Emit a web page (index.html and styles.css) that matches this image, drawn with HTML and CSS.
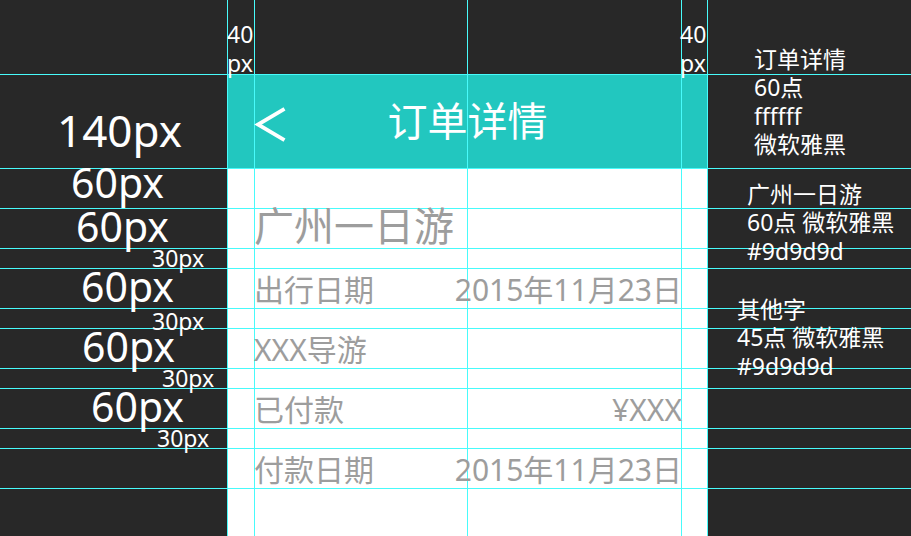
FILE: index.html
```html
<!DOCTYPE html>
<html lang="zh-CN">
<head>
<meta charset="utf-8">
<title>订单详情 标注</title>
<link rel="stylesheet" href="styles.css">
</head>
<body>
<div class="page">
  <div class="left">
    <div class="band b140 x57">140px</div>
    <div class="band b60 b60-first x71">60px</div>
    <div class="band b60 x76">60px</div>
    <div class="band b30 x152">30px</div>
    <div class="band b60 x81">60px</div>
    <div class="band b30 b30-low x152">30px</div>
    <div class="band b60 x82">60px</div>
    <div class="band b30 x162">30px</div>
    <div class="band b60 x91">60px</div>
    <div class="band b30 x157">30px</div>
  </div>

  <div class="phone">
    <div class="phone-top">
      <div class="top-label">40 px</div>
      <div class="top-label">40 px</div>
    </div>
    <div class="header">
      <svg class="back" width="32" height="36" viewBox="0 0 32 36" aria-hidden="true">
        <polyline points="30.5,1.8 4,17.5 30.5,33.2" fill="none" stroke="#ffffff" stroke-width="3.8" stroke-linejoin="miter"/>
      </svg>
      <div class="title">订单详情</div>
      <div class="spacer"></div>
    </div>
    <div class="content">
      <div class="trip">广州一日游</div>
      <div class="row"><span>出行日期</span><span>2015年11月23日</span></div>
      <div class="row"><span>XXX导游</span></div>
      <div class="row"><span>已付款</span><span>¥XXX</span></div>
      <div class="row"><span>付款日期</span><span>2015年11月23日</span></div>
    </div>
  </div>

  <div class="notes">
    <div class="note n1">
      <div>订单详情</div>
      <div>60点</div>
      <div>ffffff</div>
      <div>微软雅黑</div>
    </div>
    <div class="note n2">
      <div>广州一日游</div>
      <div>60点 微软雅黑</div>
      <div>#9d9d9d</div>
    </div>
    <div class="note n3">
      <div>其他字</div>
      <div>45点 微软雅黑</div>
      <div>#9d9d9d</div>
    </div>
  </div>
</div>

<div class="guides" aria-hidden="true">
  <div class="gh g74"></div>
  <div class="gh g168"></div>
  <div class="gh g208"></div>
  <div class="gh g248"></div>
  <div class="gh g268"></div>
  <div class="gh g308"></div>
  <div class="gh g328"></div>
  <div class="gh g368"></div>
  <div class="gh g388"></div>
  <div class="gh g428"></div>
  <div class="gh g448"></div>
  <div class="gh g488"></div>
  <div class="gv v227"></div>
  <div class="gv v254"></div>
  <div class="gv v467"></div>
  <div class="gv v681"></div>
  <div class="gv v707"></div>
</div>
</body>
</html>
```
FILE: styles.css
```css
* { box-sizing: border-box; }

html, body {
  margin: 0;
  padding: 0;
}

body {
  width: 911px;
  height: 536px;
  overflow: hidden;
  background: #282828;
  font-family: "Noto Sans", "Noto Sans CJK SC", sans-serif;
  color: #ffffff;
}

.page {
  display: flex;
  width: 911px;
  height: 536px;
}

/* ---------- left measurement column ---------- */
.left {
  width: 227px;
  flex: none;
  display: flex;
  flex-direction: column;
  padding-top: 74px;
}

.band {
  position: relative;
  z-index: 1;
  white-space: nowrap;
  color: #ffffff;
  flex: none;
}

.b140 {
  height: 94px;
  font-size: 44px;
  line-height: 44px;
  padding-top: 34px;
}

.b60 {
  height: 40px;
  font-size: 41px;
  line-height: 36px;
}

.b60-first { line-height: 28px; }

.b30 {
  height: 20px;
  font-size: 23px;
  line-height: 20px;
}

.b30-low { line-height: 26px; }

.x57 { padding-left: 57px; }
.x71 { padding-left: 71px; }
.x76 { padding-left: 76px; }
.x81 { padding-left: 81px; }
.x82 { padding-left: 82px; }
.x91 { padding-left: 91px; }
.x152 { padding-left: 152px; }
.x157 { padding-left: 157px; }
.x162 { padding-left: 162px; }

/* ---------- phone ---------- */
.phone {
  width: 480px;
  flex: none;
  display: flex;
  flex-direction: column;
}

.phone-top {
  height: 74px;
  flex: none;
  display: flex;
  justify-content: space-between;
  padding-top: 20px;
}

.top-label {
  position: relative;
  z-index: 1;
  width: 27px;
  font-size: 23px;
  line-height: 29px;
  color: #ffffff;
}

.header {
  height: 94px;
  flex: none;
  background: #22c7bf;
  display: grid;
  grid-template-columns: 1fr auto 1fr;
  align-items: center;
  padding: 0 26px 0 27px;
}

.back {
  display: block;
  position: relative;
  z-index: 1;
  margin-top: 7px;
}

.title {
  position: relative;
  z-index: 1;
  font-size: 40px;
  line-height: 40px;
  color: #ffffff;
  white-space: nowrap;
}

.content {
  flex: 1;
  background: #ffffff;
  display: flex;
  flex-direction: column;
  gap: 20px;
  padding: 40px 25px 0 27px;
  color: #9d9d9d;
}

.trip {
  position: relative;
  z-index: 1;
  height: 40px;
  font-size: 40px;
  line-height: 36px;
  white-space: nowrap;
}

.row {
  position: relative;
  z-index: 1;
  height: 40px;
  display: flex;
  justify-content: space-between;
  font-size: 30px;
  line-height: 30px;
  padding-top: 7px;
  white-space: nowrap;
}

/* ---------- right notes ---------- */
.notes {
  width: 204px;
  flex: none;
  padding-top: 45px;
  display: flex;
  flex-direction: column;
}

.note {
  position: relative;
  z-index: 1;
  font-size: 23px;
  line-height: 28.3px;
  color: #ffffff;
  white-space: nowrap;
}

.n1 { padding-left: 47px; }
.n2 { padding-left: 40px; margin-top: 22px; }
.n3 { padding-left: 30px; margin-top: 30px; }

/* ---------- guide lines ---------- */
.guides {
  position: absolute;
  left: 0;
  top: 0;
  width: 911px;
  height: 536px;
  z-index: 0;
  pointer-events: none;
}

.gh {
  position: absolute;
  left: 0;
  width: 911px;
  height: 1px;
  background: #48fbfb;
}

.gv {
  position: absolute;
  top: 0;
  width: 1px;
  height: 536px;
  background: #48fbfb;
}

.g74 { top: 74px; }
.g168 { top: 168px; }
.g208 { top: 208px; }
.g248 { top: 248px; }
.g268 { top: 268px; }
.g308 { top: 308px; }
.g328 { top: 328px; }
.g368 { top: 368px; }
.g388 { top: 388px; }
.g428 { top: 428px; }
.g448 { top: 448px; }
.g488 { top: 488px; }

.v227 { left: 227px; }
.v254 { left: 254px; }
.v467 { left: 467px; }
.v681 { left: 681px; }
.v707 { left: 707px; }
```
